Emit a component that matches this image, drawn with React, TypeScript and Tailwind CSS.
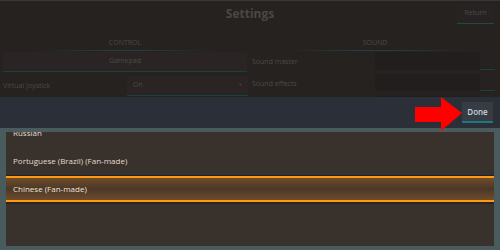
import React from "react";

export default function App() {
  const font = { fontFamily: '"Open Sans", "DejaVu Sans", sans-serif' };
  return (
    <div className="relative w-[500px] h-[250px] overflow-hidden bg-[#242120]" style={font}>
      {/* Dimmed settings screen */}
      <div className="h-[97px] flex flex-col border-t border-[#3a3836] bg-[#252220] overflow-hidden">
        <div className="relative h-[26px] shrink-0 flex items-center justify-center">
          <span className="text-[12px] font-bold text-[#4a4846]">Settings</span>
          <div className="absolute right-[6px] top-[3px] w-[37px] h-[20px] flex items-center justify-center bg-[#262322] border-b border-[#1f4a4a] text-[7px] text-[#4a4846]">
            Return
          </div>
        </div>
        <div className="flex flex-1">
          {/* control column */}
          <div className="w-[250px] flex flex-col">
            <div className="h-[25px] flex flex-col items-center justify-end pb-[1px]">
              <span className="text-[7px] text-[#4c4a48]">CONTROL</span>
              <div className="w-[180px] h-[1px] mt-[2px] bg-[linear-gradient(to_right,transparent,#1f4044_40%,#1f4044_60%,transparent)]" />
            </div>
            <div className="mx-[3px] h-[20px] flex items-center justify-center bg-[#2a2524] border-b border-[#1c3f40] text-[7px] text-[#4c4a48]">
              Gamepad
            </div>
            <div className="flex items-center mt-[3px] h-[22px]">
              <span className="w-[127px] pl-[3px] text-[7px] text-[#4c4a48]">Virtual Joystick</span>
              <div className="w-[121px] h-[20px] flex items-center justify-between px-[6px] bg-[#2a2524] border-b border-[#1c3f40] text-[7px] text-[#4c4a48]">
                <span>On</span>
                <span className="text-[6px]">+</span>
              </div>
            </div>
          </div>
          {/* sound column */}
          <div className="w-[250px] flex flex-col">
            <div className="h-[25px] flex flex-col items-center justify-end pb-[1px]">
              <span className="text-[7px] text-[#4c4a48]">SOUND</span>
              <div className="w-[180px] h-[1px] mt-[2px] bg-[linear-gradient(to_right,transparent,#1f4044_40%,#1f4044_60%,transparent)]" />
            </div>
            <div className="flex items-start h-[22px] pl-[2px]">
              <span className="w-[123px] pt-[5px] text-[7px] text-[#4c4a48]">Sound master</span>
              <div className="w-[105px] h-[18px] bg-[#221e1d]" />
              <div className="w-[15px] h-[18px] bg-[#262221] border-b border-[#1c3f40]" />
            </div>
            <div className="flex items-start h-[22px] pl-[2px]">
              <span className="w-[123px] pt-[5px] text-[7px] text-[#4c4a48]">Sound effects</span>
              <div className="w-[105px] h-[17px] bg-[#221e1d]" />
              <div className="w-[15px] h-[17px] bg-[#262221] border-b border-[#1c3f40]" />
            </div>
            <div className="flex items-start h-[10px] pl-[125px]">
              <div className="w-[105px] h-[10px] bg-[#221e1d]" />
            </div>
          </div>
        </div>
      </div>

      {/* Language panel */}
      <div className="h-[153px] flex flex-col bg-[#2b2f38]">
        <div className="h-[31px] shrink-0 flex items-start justify-end pr-[7px] pt-[5px]">
          <div className="w-[31px] h-[21px] flex items-center justify-center bg-[#363b44] border-b-2 border-[#1f7a80] rounded-[1px] text-[8px] text-[#c9d4dc] font-semibold">
            Done
          </div>
        </div>
        <div className="flex-1 bg-[#4a5b5e] px-[6px] pt-[4px] pb-[4px]">
          <div className="h-full bg-[#38312c] flex flex-col overflow-hidden">
            <div className="h-[28px] shrink-0 -mt-[13px] flex items-center pl-[7px] text-[8px] text-[#e4dcd0]">Russian</div>
            <div className="h-[28px] shrink-0 flex items-center pl-[7px] text-[8px] text-[#e4dcd0]">Portuguese (Brazil) (Fan-made)</div>
            <div className="h-[1px] shrink-0 bg-[#1c2430]" />
            <div className="h-[26px] shrink-0 flex items-center pl-[7px] text-[8px] text-[#efe6d8] border-y-2 border-[#ff9a10] bg-[linear-gradient(to_bottom,#6e4c2a,#4b3727_50%,#6e4c2a)]">
              Chinese (Fan-made)
            </div>
            <div className="h-[2px] shrink-0 bg-[#2a2522]" />
          </div>
        </div>
      </div>

      {/* Red arrow annotation */}
      <svg className="absolute left-[415px] top-[97px]" width="50" height="34" viewBox="0 0 50 34">
        <polygon points="0,10 26,10 26,0 47,16 26,34 26,25 0,25" fill="#ff0000" />
      </svg>
    </div>
  );
}
